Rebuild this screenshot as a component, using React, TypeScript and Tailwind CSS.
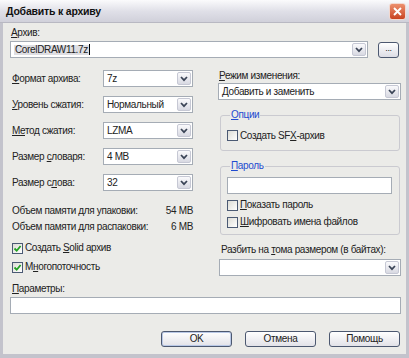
import React from "react";

function U({ children }: { children: React.ReactNode }) {
  return <span className="underline underline-offset-[1px]">{children}</span>;
}

function Chevron() {
  return (
    <svg width="8" height="6" viewBox="0 0 8 6">
      <path d="M1 1 L4 4.2 L7 1" fill="none" stroke="#3a4456" strokeWidth="1.7" />
    </svg>
  );
}

function Combo({ value, className = "" }: { value?: React.ReactNode; className?: string }) {
  return (
    <div className={`flex h-[17px] items-center border border-[#a5acb5] bg-white ${className}`}>
      <div className="flex-1 truncate pl-[3px] text-[10px] leading-none text-[#222]">{value}</div>
      <div className="m-px flex h-[13px] w-[14px] items-center justify-center rounded-[2px] border border-[#c6c8d4] bg-gradient-to-b from-[#fafafc] to-[#d8d9e2]">
        <Chevron />
      </div>
    </div>
  );
}

function Check({ checked, children }: { checked?: boolean; children: React.ReactNode }) {
  return (
    <div className="flex items-center gap-[2px]">
      <div className="flex h-[11px] w-[11px] items-center justify-center border border-[#4b5a74] bg-gradient-to-br from-[#dcdcd6] to-white">
        {checked && (
          <svg width="9" height="9" viewBox="0 0 9 9">
            <path d="M1.5 4.5 L3.7 6.7 L7.6 2" fill="none" stroke="#21a121" strokeWidth="1.8" />
          </svg>
        )}
      </div>
      <span className="text-[10px] leading-none text-[#222]">{children}</span>
    </div>
  );
}

function Btn({ children, def }: { children: React.ReactNode; def?: boolean }) {
  return (
    <div
      className={`flex h-[16px] w-[71px] items-center justify-center rounded-[3px] border border-[#4c5870] bg-gradient-to-b from-white to-[#e2e2e8] text-[10px] leading-none text-[#222] ${
        def ? "shadow-[inset_0_0_0_1px_#b9c8e6]" : ""
      }`}
    >
      {children}
    </div>
  );
}

export default function App() {
  return (
    <div className="flex h-[358px] w-[409px] flex-col bg-[#c8c8d0] font-['Liberation_Sans',Arial,sans-serif] tracking-[-0.35px] text-[#222]">
      {/* title bar */}
      <div className="flex h-[23px] items-center justify-between border-b border-[#b8b8c2] bg-gradient-to-b from-[#fbfbfc] via-[#e0e0e8] to-[#d0d0da] pl-[6px] pr-[3px]">
        <span className="text-[10.5px] font-bold leading-none tracking-[-0.2px] text-[#111]">Добавить к архиву</span>
        <div className="flex h-[17px] w-[17px] items-center justify-center rounded-[3px] border border-[#f2d8cf] bg-gradient-to-b from-[#ec8f6d] to-[#c8431f]">
          <svg width="9" height="9" viewBox="0 0 9 9">
            <path d="M1 1 L8 8 M8 1 L1 8" stroke="white" strokeWidth="1.9" />
          </svg>
        </div>
      </div>

      {/* body */}
      <div className="flex flex-1 flex-col border-x-[3px] border-b-[4px] border-[#c3c3cc] bg-[#ebebe8] pl-[7px] pr-[5px] pt-[4px]">
        <div className="h-[12px] pl-[1px] text-[10px] leading-[12px]">
          <U>А</U>рхив:
        </div>
        <div className="mt-[2px] flex items-center">
          <Combo
            className="w-[358px]"
            value={
              <span className="flex items-center">
                <span className="bg-[#dedee2] px-px">CorelDRAW11.7z</span>
                <span className="h-[11px] w-px bg-black" />
              </span>
            }
          />
          <div className="ml-[10px] flex h-[16px] w-[21px] items-center justify-center rounded-[3px] border border-[#4c5870] bg-gradient-to-b from-white to-[#dcdde5] pb-[3px] text-[9px] leading-none">
            ...
          </div>
        </div>

        <div className="mt-[12px] flex gap-[25px]">
          {/* left column */}
          <div className="flex w-[183px] flex-col">
            <div className="flex flex-col gap-[9px]">
              <div className="flex h-[17px] items-center justify-between pl-[2px] text-[10px] leading-none">
                <span>
                  <U>Ф</U>ормат архива:
                </span>
                <Combo className="w-[90px]" value="7z" />
              </div>
              <div className="flex h-[17px] items-center justify-between pl-[2px] text-[10px] leading-none">
                <span>
                  <U>У</U>ровень сжатия:
                </span>
                <Combo className="w-[90px]" value="Нормальный" />
              </div>
              <div className="flex h-[17px] items-center justify-between pl-[2px] text-[10px] leading-none">
                <span>
                  <U>Ме</U>тод сжатия:
                </span>
                <Combo className="w-[90px]" value="LZMA" />
              </div>
              <div className="flex h-[17px] items-center justify-between pl-[2px] text-[10px] leading-none">
                <span>
                  Размер <U>с</U>ловаря:
                </span>
                <Combo className="w-[90px]" value="4 MB" />
              </div>
              <div className="flex h-[17px] items-center justify-between pl-[2px] text-[10px] leading-none">
                <span>
                  Размер с<U>л</U>ова:
                </span>
                <Combo className="w-[90px]" value="32" />
              </div>
            </div>
            <div className="mt-[12px] flex h-[16px] items-center justify-between pl-[2px] text-[10px] leading-none">
              <span>Объем памяти для упаковки:</span>
              <span>54 MB</span>
            </div>
            <div className="flex h-[16px] items-center justify-between pl-[2px] text-[10px] leading-none">
              <span>Объем памяти для распаковки:</span>
              <span>6 MB</span>
            </div>
            <div className="mt-[4px] flex h-[18px] items-center pl-[2px]">
              <Check checked>
                Создать <U>S</U>olid архив
              </Check>
            </div>
            <div className="mt-[1px] flex h-[18px] items-center pl-[2px]">
              <Check checked>
                М<U>н</U>огопоточность
              </Check>
            </div>
          </div>

          {/* right column */}
          <div className="flex w-[183px] flex-col">
            <div className="h-[12px] pl-[1px] text-[10px] leading-[12px]">
              <U>Р</U>ежим изменения:
            </div>
            <Combo className="mt-[1px] w-[183px]" value="Добавить и заменить" />

            <fieldset className="mt-[9px] ml-[2px] mr-[1px] rounded-[3px] border border-[#cacad0] px-[6px] pb-[9px] pt-[9px]">
              <legend className="ml-[3px] px-[1px] text-[10px] leading-[12px] text-[#1f4bd0]">
                <U>О</U>пции
              </legend>
              <Check>
                Создать SF<U>X</U>-архив
              </Check>
            </fieldset>

            <fieldset className="mt-[9px] ml-[2px] mr-[1px] rounded-[3px] border border-[#cacad0] pb-[3px] pl-[6px] pr-[7px] pt-[5px]">
              <legend className="ml-[3px] px-[1px] text-[10px] leading-[12px] text-[#1f4bd0]">
                <U>П</U>ароль
              </legend>
              <div className="h-[17px] border border-[#a5acb5] bg-white" />
              <div className="mt-[3px] flex h-[16px] items-center">
                <Check>
                  <U>П</U>оказать пароль
                </Check>
              </div>
              <div className="flex h-[18px] items-center">
                <Check>
                  <U>Ш</U>ифровать имена файлов
                </Check>
              </div>
            </fieldset>

            <div className="mt-[9px] h-[12px] pl-[3px] text-[10px] leading-[12px]">
              Разбить на <U>т</U>ома размером (в байтах):
            </div>
            <Combo className="mt-[3px] ml-px w-[182px]" />
          </div>
        </div>

        <div className="mt-[7px] h-[12px] pl-[2px] text-[10px] leading-[12px]">
          <U>П</U>араметры:
        </div>
        <div className="mt-[2px] h-[17px] w-[391px] border border-[#a5acb5] bg-white" />

        <div className="mt-[17px] flex w-[390px] justify-end gap-[13px]">
          <Btn def>OK</Btn>
          <Btn>Отмена</Btn>
          <Btn>Помощь</Btn>
        </div>
      </div>
    </div>
  );
}
